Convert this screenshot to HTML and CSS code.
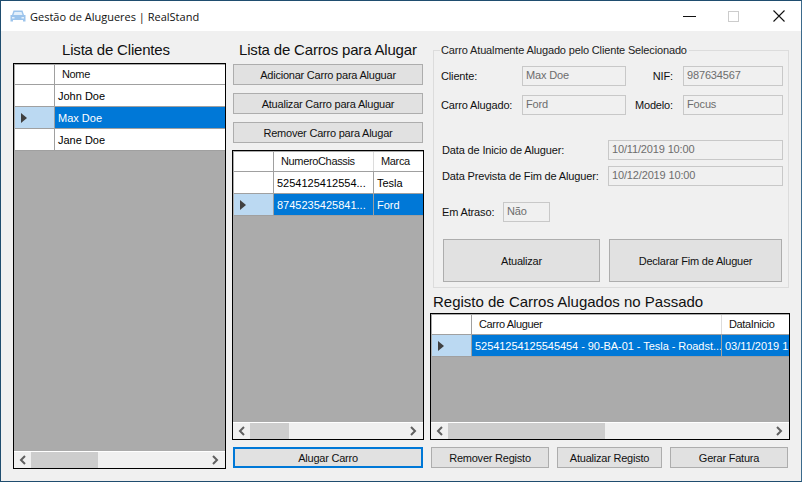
FILE: index.html
```html
<!DOCTYPE html>
<html lang="pt">
<head>
    <meta charset="UTF-8">
    <title>Gestão de Alugueres | RealStand</title>
    <link rel="stylesheet" href="styles.css">
</head>
<body>
    <div class="window">
        <div class="titlebar">
            <svg class="app-icon" width="16" height="14" viewBox="0 0 16 14">
                <path d="M3.5 1.5 H12.5 L14 6 H15.5 V12.5 H13 V11 H3 V12.5 H0.5 V6 H2 Z" fill="#9cc4ec"/>
                <path d="M4.5 3 H11.5 L12.5 6 H3.5 Z" fill="#e4f0fb"/>
                <path d="M2 8 H4.5 V9.5 H2 Z M11.5 8 H14 V9.5 H11.5 Z" fill="#e4f0fb"/>
            </svg>
            <span class="app-title">Gestão de Alugueres | RealStand</span>
            <div class="win-controls">
                <span class="win-min"></span>
                <span class="win-max"></span>
                <svg class="win-close" width="12" height="12" viewBox="0 0 12 12"><path d="M0.5 0.5 L11.5 11.5 M11.5 0.5 L0.5 11.5" stroke="#111" stroke-width="1.1"/></svg>
            </div>
        </div>

        <div class="content">
            <div class="col-clients">
                <h2 class="heading heading-clients">Lista de Clientes</h2>
                <div class="grid grid-clients">
                    <div class="row row-head">
                        <div class="cell-rh"></div>
                        <div class="cell head-cell fill">Nome</div>
                    </div>
                    <div class="row">
                        <div class="cell-rh"></div>
                        <div class="cell fill">John Doe</div>
                    </div>
                    <div class="row selected">
                        <div class="cell-rh"><span class="arrow"></span></div>
                        <div class="cell fill">Max Doe</div>
                    </div>
                    <div class="row">
                        <div class="cell-rh"></div>
                        <div class="cell fill">Jane Doe</div>
                    </div>
                    <div class="grid-empty"></div>
                    <div class="scrollbar">
                        <svg class="chev" width="8" height="10" viewBox="0 0 8 10"><path d="M6 1 L2 5 L6 9" fill="none" stroke="#606060" stroke-width="2"/></svg>
                        <div class="track"><div class="thumb thumb-clients"></div></div>
                        <svg class="chev" width="8" height="10" viewBox="0 0 8 10"><path d="M2 1 L6 5 L2 9" fill="none" stroke="#606060" stroke-width="2"/></svg>
                    </div>
                </div>
            </div>

            <div class="col-cars">
                <h2 class="heading heading-cars">Lista de Carros para Alugar</h2>
                <button class="btn btn-car">Adicionar Carro para Aluguar</button>
                <button class="btn btn-car">Atualizar Carro para Aluguar</button>
                <button class="btn btn-car">Remover Carro para Alugar</button>
                <div class="grid grid-cars">
                    <div class="row row-head">
                        <div class="cell-rh"></div>
                        <div class="cell head-cell col-chassis">NumeroChassis</div>
                        <div class="cell head-cell fill">Marca</div>
                    </div>
                    <div class="row">
                        <div class="cell-rh"></div>
                        <div class="cell col-chassis">5254125412554...</div>
                        <div class="cell fill">Tesla</div>
                    </div>
                    <div class="row selected">
                        <div class="cell-rh"><span class="arrow"></span></div>
                        <div class="cell col-chassis">8745235425841...</div>
                        <div class="cell fill">Ford</div>
                    </div>
                    <div class="grid-empty"></div>
                    <div class="scrollbar">
                        <svg class="chev" width="8" height="10" viewBox="0 0 8 10"><path d="M6 1 L2 5 L6 9" fill="none" stroke="#606060" stroke-width="2"/></svg>
                        <div class="track"><div class="thumb thumb-cars"></div></div>
                        <svg class="chev" width="8" height="10" viewBox="0 0 8 10"><path d="M2 1 L6 5 L2 9" fill="none" stroke="#606060" stroke-width="2"/></svg>
                    </div>
                </div>
                <button class="btn btn-rent">Alugar Carro</button>
            </div>

            <div class="col-right">
                <fieldset class="group">
                    <legend class="group-title">Carro Atualmente Alugado pelo Cliente Selecionado</legend>
                    <div class="form-row row-client">
                        <label class="lbl lbl-left">Cliente:</label>
                        <div class="field field-mid">Max Doe</div>
                        <label class="lbl lbl-right">NIF:</label>
                        <div class="field field-end">987634567</div>
                    </div>
                    <div class="form-row row-car">
                        <label class="lbl lbl-left">Carro Alugado:</label>
                        <div class="field field-mid">Ford</div>
                        <label class="lbl lbl-right">Modelo:</label>
                        <div class="field field-end">Focus</div>
                    </div>
                    <div class="form-row row-date1">
                        <label class="lbl lbl-date">Data de Inicio de Aluguer:</label>
                        <div class="field field-date">10/11/2019 10:00</div>
                    </div>
                    <div class="form-row row-date2">
                        <label class="lbl lbl-date">Data Prevista de Fim de Aluguer:</label>
                        <div class="field field-date">10/12/2019 10:00</div>
                    </div>
                    <div class="form-row row-late">
                        <label class="lbl lbl-late">Em Atraso:</label>
                        <div class="field field-late">Não</div>
                    </div>
                    <div class="group-actions">
                        <button class="btn btn-update">Atualizar</button>
                        <button class="btn btn-end">Declarar Fim de Aluguer</button>
                    </div>
                </fieldset>
                <h2 class="heading heading-history">Registo de Carros Alugados no Passado</h2>
                <div class="grid grid-history">
                    <div class="row row-head">
                        <div class="cell-rh"></div>
                        <div class="cell head-cell col-car">Carro Aluguer</div>
                        <div class="cell head-cell fill">DataInicio</div>
                    </div>
                    <div class="row selected">
                        <div class="cell-rh"><span class="arrow"></span></div>
                        <div class="cell col-car">52541254125545454 - 90-BA-01 - Tesla - Roadst...</div>
                        <div class="cell fill">03/11/2019 1</div>
                    </div>
                    <div class="grid-empty"></div>
                    <div class="scrollbar">
                        <svg class="chev" width="8" height="10" viewBox="0 0 8 10"><path d="M6 1 L2 5 L6 9" fill="none" stroke="#606060" stroke-width="2"/></svg>
                        <div class="track"><div class="thumb thumb-history"></div></div>
                        <svg class="chev" width="8" height="10" viewBox="0 0 8 10"><path d="M2 1 L6 5 L2 9" fill="none" stroke="#606060" stroke-width="2"/></svg>
                    </div>
                </div>
                <div class="history-actions">
                    <button class="btn btn-remove">Remover Registo</button>
                    <button class="btn btn-refresh">Atualizar Registo</button>
                    <button class="btn btn-invoice">Gerar Fatura</button>
                </div>
            </div>
        </div>
    </div>
</body>
</html>
```
FILE: styles.css
```css
* {
    box-sizing: border-box;
}
body {
    margin: 0;
    width: 802px;
    height: 482px;
    overflow: hidden;
    font-family: "Liberation Sans", Arial, sans-serif;
    font-size: 11px;
    letter-spacing: -0.15px;
    color: #000;
}
.window {
    width: 802px;
    height: 482px;
    display: flex;
    flex-direction: column;
    background: #f0f0f0;
    border: 1px solid #1f4d6f;
    border-right-color: #3b6a8c;
}
.titlebar {
    height: 30px;
    flex: none;
    background: #fff;
    display: flex;
    align-items: center;
    padding-left: 9px;
}
.app-icon {
    flex: none;
}
.app-title {
    margin-left: 4px;
    font-family: "Open Sans", sans-serif;
    font-size: 11px;
    letter-spacing: 0;
    color: #111;
}
.win-controls {
    margin-left: auto;
    display: flex;
    align-items: center;
    padding-right: 16px;
}
.win-min {
    width: 13px;
    height: 1px;
    background: #111;
}
.win-max {
    width: 11px;
    height: 11px;
    border: 1px solid #ccc;
    margin-left: 32px;
}
.win-close {
    margin-left: 34px;
}

.content {
    flex: 1;
    display: flex;
    padding-left: 12px;
    min-height: 0;
}
.heading {
    margin: 0;
    font-weight: normal;
    font-size: 15px;
    line-height: 18px;
    letter-spacing: -0.18px;
    color: #111;
}

.col-clients {
    width: 213px;
    flex: none;
    display: flex;
    flex-direction: column;
}
.heading-clients {
    margin: 10px 0 4px 49px;
}
.grid-clients {
    height: 406px;
}

.col-cars {
    width: 192px;
    margin-left: 6px;
    flex: none;
    display: flex;
    flex-direction: column;
}
.heading-cars {
    margin: 10px 0 5px 7px;
}
.btn {
    background: #e1e1e1;
    border: 1px solid #adadad;
    font-family: inherit;
    font-size: 11px;
    letter-spacing: -0.22px;
    color: #111;
    padding: 0;
}
.btn-car {
    width: 190px;
    height: 21px;
    margin: 0 0 8px 1px;
    flex: none;
}
.grid-cars {
    height: 290px;
    margin-top: -1px;
}
.btn-rent {
    width: 190px;
    height: 21px;
    margin: 7px 0 0 1px;
    border: 2px solid #0078d7;
    flex: none;
}

.col-right {
    width: 360px;
    margin-left: 6px;
    flex: none;
    display: flex;
    flex-direction: column;
}
.group {
    margin: 12px 0 0 3px;
    padding: 0;
    width: 356px;
    height: 245px;
    border: 1px solid #dcdcdc;
    min-width: 0;
}
.group-title {
    margin-left: 6px;
    padding: 0 2px 0 1px;
    font-size: 11px;
    line-height: 14px;
    color: #222;
}
.form-row {
    display: flex;
    align-items: center;
}
.lbl {
    color: #111;
    flex: none;
    white-space: nowrap;
}
.field {
    height: 20px;
    border: 1px solid #c8c8c8;
    background: #f0f0f0;
    color: #6d6d6d;
    padding: 0 3px;
    line-height: 17px;
    flex: none;
}
.row-client {
    margin-top: 9px;
    height: 20px;
}
.row-car {
    margin-top: 9px;
    height: 20px;
}
.row-date1 {
    margin-top: 25px;
    height: 20px;
}
.row-date2 {
    margin-top: 6px;
    height: 20px;
}
.row-late {
    margin-top: 16px;
    height: 20px;
}
.lbl-left {
    width: 81px;
    margin-left: 7px;
}
.field-mid {
    width: 104px;
}
.lbl-right {
    width: 47px;
    text-align: right;
}
.field-end {
    width: 100px;
    margin-left: 10px;
}
.lbl-date {
    width: 166px;
    margin-left: 8px;
}
.field-date {
    width: 175px;
}
.lbl-late {
    width: 61px;
    margin-left: 8px;
}
.field-late {
    width: 47px;
}
.group-actions {
    display: flex;
    margin: 17px 0 0 9px;
    gap: 9px;
}
.btn-update {
    width: 157px;
    height: 43px;
}
.btn-end {
    width: 173px;
    height: 43px;
}
.heading-history {
    margin: 5px 0 2px 3px;
    letter-spacing: 0;
}
.grid-history {
    width: 360px;
    height: 127px;
}
.history-actions {
    display: flex;
    margin: 7px 0 0 1px;
    gap: 8px;
}
.btn-remove {
    width: 118px;
    height: 21px;
}
.btn-refresh {
    width: 105px;
    height: 21px;
}
.btn-invoice {
    width: 118px;
    height: 21px;
}

/* data grid */
.grid {
    border: 1px solid #000;
    padding: 1px 0 0 1px;
    display: flex;
    flex-direction: column;
    background: #ababab;
    flex: none;
    overflow: hidden;
}
.row {
    display: flex;
    height: 22px;
    flex: none;
    background: #fff;
}
.row-head {
    height: 20px;
    border-bottom: 1px solid #a0a0a0;
}
.cell-rh {
    width: 40px;
    flex: none;
    border-right: 1px solid #a0a0a0;
    border-bottom: 1px solid #a0a0a0;
    display: flex;
    align-items: center;
    padding-left: 6px;
}
.row-head .cell-rh {
    border-bottom: none;
}
.cell {
    border-right: 1px solid #a0a0a0;
    border-bottom: 1px solid #a0a0a0;
    padding: 0 0 0 3px;
    line-height: 22px;
    letter-spacing: 0;
    white-space: nowrap;
    overflow: hidden;
}
.head-cell {
    padding-left: 7px;
    border-bottom: none;
    border-right-color: #dcdcdc;
    line-height: 18px;
    letter-spacing: -0.35px;
    color: #111;
}
.fill {
    flex: 1;
    border-right: none;
    min-width: 0;
}
.col-chassis {
    width: 100px;
    flex: none;
}
.col-car {
    width: 250px;
    flex: none;
}
.selected .col-car {
    letter-spacing: -0.05px;
}
.selected .cell {
    background: #0078d7;
    color: #fff;
}
.selected .cell-rh {
    background: #bbd9f2;
}
.arrow {
    width: 0;
    height: 0;
    border-left: 6px solid #404040;
    border-top: 5px solid transparent;
    border-bottom: 5px solid transparent;
}
.grid-empty {
    flex: 1;
    min-height: 0;
}
.scrollbar {
    height: 17px;
    flex: none;
    margin-left: -1px;
    background: #f0f0f0;
    border-top: 1px solid #fff;
    display: flex;
    align-items: center;
    padding: 0 6px 0 5px;
}
.chev {
    flex: none;
}
.track {
    flex: 1;
    align-self: stretch;
    padding-left: 4px;
}
.thumb {
    height: 100%;
    background: #cdcdcd;
}
.thumb-clients {
    width: 67px;
}
.thumb-cars {
    width: 39px;
}
.thumb-history {
    width: 157px;
}
```
